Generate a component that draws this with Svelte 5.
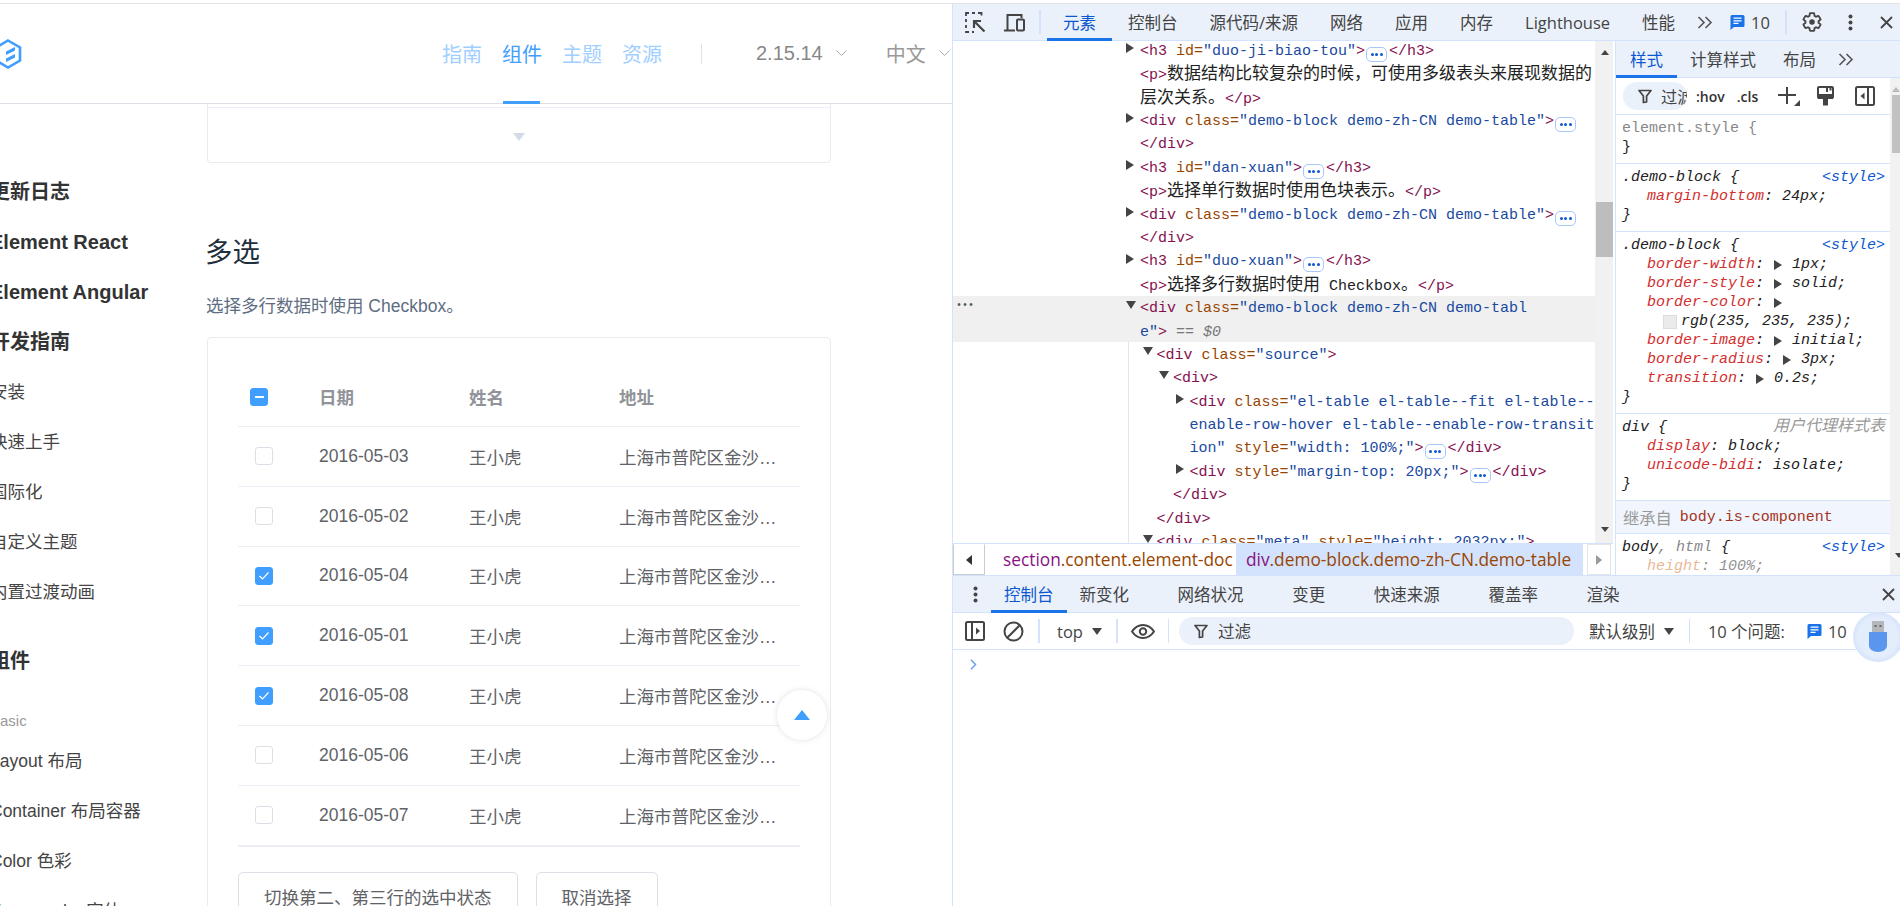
<script>
	const side = [
		{ t: '更新日志', k: 'b first' },
		{ t: 'Element React', k: 'b' },
		{ t: 'Element Angular', k: 'b' },
		{ t: '开发指南', k: 'b' },
		{ t: '安装', k: '' },
		{ t: '快速上手', k: '' },
		{ t: '国际化', k: '' },
		{ t: '自定义主题', k: '' },
		{ t: '内置过渡动画', k: '' },
		{ t: '组件', k: 'b group' },
		{ t: 'Basic', k: 'cap' },
		{ t: 'Layout 布局', k: '' },
		{ t: 'Container 布局容器', k: '' },
		{ t: 'Color 色彩', k: '' },
		{ t: 'Typography 字体', k: '' }
	];

	const rows = [
		{ date: '2016-05-03', on: false },
		{ date: '2016-05-02', on: false },
		{ date: '2016-05-04', on: true },
		{ date: '2016-05-01', on: true },
		{ date: '2016-05-08', on: true },
		{ date: '2016-05-06', on: false },
		{ date: '2016-05-07', on: false }
	];

	const blockCls = 'demo-block demo-zh-CN demo-table';

	// segments: [kind, text]; kind "more" is the collapsed-children pill
	const tree = [
		{ arrow: 'r', s: [['t', '<h3 '], ['a', 'id='], ['v', '"duo-ji-biao-tou"'], ['t', '>'], ['more'], ['t', '</h3>']] },
		{ s: [['t', '<p>'], ['z', '数据结构比较复杂的时候，可使用多级表头来展现数据的']] },
		{ s: [['z', '层次关系。'], ['t', '</p>']] },
		{ arrow: 'r', s: [['t', '<div '], ['a', 'class='], ['v', `"${blockCls}"`], ['t', '>'], ['more']] },
		{ s: [['t', '</div>']] },
		{ arrow: 'r', s: [['t', '<h3 '], ['a', 'id='], ['v', '"dan-xuan"'], ['t', '>'], ['more'], ['t', '</h3>']] },
		{ s: [['t', '<p>'], ['z', '选择单行数据时使用色块表示。'], ['t', '</p>']] },
		{ arrow: 'r', s: [['t', '<div '], ['a', 'class='], ['v', `"${blockCls}"`], ['t', '>'], ['more']] },
		{ s: [['t', '</div>']] },
		{ arrow: 'r', s: [['t', '<h3 '], ['a', 'id='], ['v', '"duo-xuan"'], ['t', '>'], ['more'], ['t', '</h3>']] },
		{ s: [['t', '<p>'], ['z', '选择多行数据时使用'], ['x', ' Checkbox'], ['z', '。'], ['t', '</p>']] },
		{ arrow: 'd', sel: true, dots: true, s: [['t', '<div '], ['a', 'class='], ['v', '"demo-block demo-zh-CN demo-tabl']] },
		{ sel: true, s: [['v', 'e"'], ['t', '>'], ['g', ' == $0']] },
		{ arrow: 'd', lv: 1, s: [['t', '<div '], ['a', 'class='], ['v', '"source"'], ['t', '>']] },
		{ arrow: 'd', lv: 2, s: [['t', '<div>']] },
		{ arrow: 'r', lv: 3, s: [['t', '<div '], ['a', 'class='], ['v', '"el-table el-table--fit el-table--']] },
		{ lv: 3, s: [['v', 'enable-row-hover el-table--enable-row-transit']] },
		{ lv: 3, s: [['v', 'ion"'], ['a', ' style='], ['v', '"width: 100%;"'], ['t', '>'], ['more'], ['t', '</div>']] },
		{ arrow: 'r', lv: 3, s: [['t', '<div '], ['a', 'style='], ['v', '"margin-top: 20px;"'], ['t', '>'], ['more'], ['t', '</div>']] },
		{ lv: 2, s: [['t', '</div>']] },
		{ lv: 1, s: [['t', '</div>']] },
		{ arrow: 'd', lv: 1, s: [['t', '<div '], ['a', 'class='], ['v', '"meta"'], ['a', ' style='], ['v', '"height: 2032px;"'], ['t', '>']] }
	];
</script>

{#snippet msgIcon()}
	<svg class="msg" width="15" height="16" viewBox="0 0 15 16">
		<path d="M2 1h11a1.5 1.5 0 0 1 1.5 1.5v9a1.5 1.5 0 0 1-1.5 1.5H4l-3.5 3V2.5A1.5 1.5 0 0 1 2 1z" fill="#1a73e8" />
		<path d="M3.5 4.2h8M3.5 6.8h8M3.5 9.4h5" stroke="#fff" stroke-width="1.3" />
	</svg>
{/snippet}

{#snippet funnel()}
	<svg width="14" height="15" viewBox="0 0 14 15" fill="none" stroke="#444" stroke-width="1.7">
		<path d="M1 1.5h12L8.6 7v6L5.4 13.5V7z" stroke-linejoin="round" />
	</svg>
{/snippet}

{#snippet chevrons()}
	<svg width="16" height="13" viewBox="0 0 16 13" fill="none" stroke="#555" stroke-width="1.6">
		<path d="M1.5 1l5.5 5.5-5.5 5.5M8.5 1l5.500 5.500-5.500 5.500" />
	</svg>
{/snippet}

{#snippet closeX()}
	<svg width="13" height="13" viewBox="0 0 13 13" stroke="#444" stroke-width="1.8"><path d="M1 1l11 11M12 1L1 12" /></svg>
{/snippet}

{#snippet vdots()}
	<svg width="5" height="17" viewBox="0 0 5 17" fill="#444"><circle cx="2.5" cy="2.5" r="2" /><circle cx="2.5" cy="8.5" r="2" /><circle cx="2.5" cy="14.5" r="2" /></svg>
{/snippet}

<div class="app">
	<div class="main">
		<div class="page">
			<header class="head">
				<svg class="logo" width="28" height="30" viewBox="0 0 28 30" fill="none">
					<path d="M14 1.5l12 7v13l-12 7-12-7v-13z" stroke="#409eff" stroke-width="2.6" />
					<path d="M12 12.5l9-4.5v3.500l-9 4.500zM12 19.500l9-4.500v3.500l-9 4.500z" fill="#409eff" />
				</svg>
				<nav class="nav">
					<span>指南</span>
					<span class="on">组件</span>
					<span>主题</span>
					<span>资源</span>
				</nav>
				<i class="nav-sep"></i>
				<span class="ver">2.15.14</span>
				<svg class="chev" width="11" height="7" viewBox="0 0 11 7" fill="none" stroke="#aaa"><path d="M.5.5l5 5 5-5" /></svg>
				<span class="lang">中文</span>
				<svg class="chev" width="11" height="7" viewBox="0 0 11 7" fill="none" stroke="#aaa"><path d="M.5.5l5 5 5-5" /></svg>
			</header>

			<div class="body">
				<aside class="side">
					{#each side as it}
						<div class="item {it.k}">{it.t}</div>
					{/each}
				</aside>

				<section class="doc">
					<div class="tail">
						<div class="control"><i class="down"></i></div>
					</div>
					<h3>多选</h3>
					<p>选择多行数据时使用 Checkbox。</p>
					<div class="block">
						<div class="table">
							<div class="row hd">
								<span class="cb on first"><i class="minus"></i></span>
								<span>日期</span>
								<span>姓名</span>
								<span>地址</span>
							</div>
							{#each rows as r}
								<div class="row">
									<span class="cb" class:on={r.on}>
										{#if r.on}
											<svg width="12" height="10" viewBox="0 0 12 10" fill="none" stroke="#fff" stroke-width="1.2"><path d="M1.5 5l3 3 6-6.5" /></svg>
										{/if}
									</span>
									<span>{r.date}</span>
									<span>王小虎</span>
									<span class="addr">上海市普陀区金沙江路 1518 弄</span>
								</div>
							{/each}
						</div>
						<div class="btns">
							<button type="button">切换第二、第三行的选中状态</button>
							<button type="button">取消选择</button>
						</div>
					</div>
				</section>
			</div>

			<div class="backtop"><i></i></div>
		</div>

		<div class="devtools">
			<div class="bar top">
				<svg class="ic-inspect" width="21" height="21" viewBox="0 0 21 21" fill="none" stroke="#444">
					<path d="M1 4V1h3M7 1h3M13 1h3.500v2.500M1 7v3M1 13v3M1 19v1h3M7 20h2" stroke-width="1.8" />
					<path d="M19.500 19.500L10 10M9 16V9h7" stroke-width="2.2" />
				</svg>
				<svg class="ic-device" width="22" height="19" viewBox="0 0 22 19" fill="none" stroke="#444" stroke-width="2">
					<path d="M1 17.500h11M4.500 17V2h14v3" />
					<rect x="14" y="6.500" width="7" height="11" rx="1" />
				</svg>
				<i class="sep s1"></i>
				<span class="tab active">元素</span>
				<span class="tab">控制台</span>
				<span class="tab">源代码/来源</span>
				<span class="tab">网络</span>
				<span class="tab">应用</span>
				<span class="tab">内存</span>
				<span class="tab">Lighthouse</span>
				<span class="tab">性能</span>
				<span class="more-tabs">{@render chevrons()}</span>
				<span class="count">{@render msgIcon()}10</span>
				<i class="sep s2"></i>
				<svg class="gear" width="22" height="22" viewBox="0 0 24 24" fill="none" stroke="#444" stroke-width="2">
					<path d="M19.14 12.94c.04-.3.06-.61.06-.94 0-.32-.02-.64-.07-.94l2.03-1.58c.18-.14.23-.41.12-.61l-1.92-3.32c-.12-.22-.37-.29-.59-.22l-2.39.96c-.5-.38-1.03-.7-1.62-.94l-.36-2.54c-.04-.24-.24-.41-.48-.41h-3.84c-.24 0-.43.17-.47.41l-.36 2.54c-.59.24-1.13.57-1.62.94l-2.39-.96c-.22-.08-.47 0-.59.22L2.74 8.87c-.12.21-.08.47.12.61l2.03 1.58c-.05.3-.09.63-.09.94s.02.64.07.94l-2.03 1.58c-.18.14-.23.41-.12.61l1.92 3.32c.12.22.37.29.59.22l2.39-.96c.5.38 1.03.7 1.62.94l.36 2.54c.05.24.24.41.48.41h3.84c.24 0 .44-.17.47-.41l.36-2.54c.59-.24 1.13-.56 1.62-.94l2.39.96c.22.08.47 0 .59-.22l1.92-3.32c.12-.22.07-.47-.12-.61l-2.01-1.58z" />
					<circle cx="12" cy="12" r="3" fill="#444" stroke="none" />
				</svg>
				<span class="dots">{@render vdots()}</span>
				<span class="x">{@render closeX()}</span>
			</div>

			<div class="split">
				<div class="elements">
					<div class="tree-wrap">
						<div class="tree">
							<i class="guide"></i>
							{#each tree as ln}
								<div class="ln" class:sel={ln.sel} style="padding-left: {(ln.lv || 0) * 16.5 + 187}px">{#if ln.dots}<span class="ln-dots">•••</span>{/if}{#if ln.arrow}<i class="arrow {ln.arrow}"></i>{/if}{#each ln.s as [k, txt]}{#if k === 'more'}<span class="pill"><b></b><b></b><b></b></span>{:else}<span class={k}>{txt}</span>{/if}{/each}</div>
							{/each}
						</div>
						<div class="sbar wide">
							<i class="tri up"></i>
							<i class="thumb"></i>
							<i class="tri dn"></i>
						</div>
					</div>
					<div class="crumbs">
						<span class="crumb-btn"><i class="tri-l"></i></span>
						<span class="crumb"><span class="tagn">section</span><span class="cls">.content.element-doc</span></span>
						<span class="crumb cur"><span class="tagn">div</span><span class="cls">.demo-block.demo-zh-CN.demo-table</span></span>
						<span class="crumb-btn end"><i class="tri-r"></i></span>
					</div>
				</div>

				<div class="styles">
					<div class="bar sub">
						<span class="tab active">样式</span>
						<span class="tab">计算样式</span>
						<span class="tab">布局</span>
						<span class="more-tabs">{@render chevrons()}</span>
					</div>
					<div class="styles-in">
						<div class="styles-col">
							<div class="filter-row">
								<span class="pill-filter">{@render funnel()}<span>过滤</span></span>
								<span class="hov">:hov</span>
								<span class="hov cl">.cls</span>
								<svg class="plus" width="24" height="22" viewBox="0 0 24 22" fill="#444">
									<path d="M9 2h2v7h8v2h-8v8H9v-8H1V9h8z" />
									<path d="M23 15v6h-6z" />
								</svg>
								<svg class="brush" width="17" height="20" viewBox="0 0 17 20">
									<rect x="1" y="1" width="15" height="11" rx="1" fill="none" stroke="#444" stroke-width="2" />
									<path d="M1 8h15v5H1zM9 1h2v5H9zM12.500 1h2v3.500h-2zM6 13h5v6.500H6z" fill="#444" />
								</svg>
								<svg class="toggle" width="20" height="20" viewBox="0 0 20 20" fill="none" stroke="#444" stroke-width="2">
									<rect x="1" y="1" width="18" height="18" rx="1.500" />
									<path d="M13 1v18" />
									<path d="M9.500 6.500v7L5.500 10z" fill="#444" stroke="none" />
								</svg>
							</div>
							<div class="rule">
								<div class="rl gr up">element.style {'{'}</div>
								<div class="rl up">{'}'}</div>
							</div>
							<div class="rule">
								<div class="rl"><span>.demo-block {'{'}</span><span class="src">&lt;style&gt;</span></div>
								<div class="rl in"><span class="pr">margin-bottom</span>: 24px;</div>
								<div class="rl">{'}'}</div>
							</div>
							<div class="rule">
								<div class="rl"><span>.demo-block {'{'}</span><span class="src">&lt;style&gt;</span></div>
								<div class="rl in"><span class="pr">border-width</span>: <i class="arrow r inl"></i> 1px;</div>
								<div class="rl in"><span class="pr">border-style</span>: <i class="arrow r inl"></i> solid;</div>
								<div class="rl in"><span class="pr">border-color</span>: <i class="arrow r inl"></i></div>
								<div class="rl in2"><i class="swatch"></i>rgb(235, 235, 235);</div>
								<div class="rl in"><span class="pr">border-image</span>: <i class="arrow r inl"></i> initial;</div>
								<div class="rl in"><span class="pr">border-radius</span>: <i class="arrow r inl"></i> 3px;</div>
								<div class="rl in"><span class="pr">transition</span>: <i class="arrow r inl"></i> 0.2s;</div>
								<div class="rl">{'}'}</div>
							</div>
							<div class="rule">
								<div class="rl"><span>div {'{'}</span><span class="ua">用户代理样式表</span></div>
								<div class="rl in"><span class="pr">display</span>: block;</div>
								<div class="rl in"><span class="pr">unicode-bidi</span>: isolate;</div>
								<div class="rl">{'}'}</div>
							</div>
							<div class="inherit"><span class="from">继承自</span><span class="cname">body.is-component</span></div>
							<div class="rule last">
								<div class="rl"><span>body<span class="gr">, html</span> {'{'}</span><span class="src">&lt;style&gt;</span></div>
								<div class="rl in faded"><span class="pr">height</span>: 100%;</div>
							</div>
						</div>
						<div class="sbar thin">
							<i class="tri up soft"></i>
							<i class="thumb"></i>
							<i class="tri dn"></i>
						</div>
					</div>
				</div>
			</div>

			<div class="drawer">
				<div class="bar dtabs">
					<span class="dots">{@render vdots()}</span>
					<span class="tab active">控制台</span>
					<span class="tab">新变化</span>
					<span class="tab">网络状况</span>
					<span class="tab">变更</span>
					<span class="tab">快速来源</span>
					<span class="tab">覆盖率</span>
					<span class="tab">渲染</span>
					<span class="x">{@render closeX()}</span>
				</div>
				<div class="ctool">
					<svg class="c-side" width="20" height="20" viewBox="0 0 20 20" fill="none" stroke="#444" stroke-width="2">
						<rect x="1" y="1" width="18" height="18" rx="1.500" />
						<path d="M7 1v18" />
						<path d="M11 6.500v7l4-3.500z" fill="#444" stroke="none" />
					</svg>
					<svg class="c-block" width="21" height="21" viewBox="0 0 21 21" fill="none" stroke="#444" stroke-width="2">
						<circle cx="10.500" cy="10.500" r="9" /><path d="M4 17L17 4" />
					</svg>
					<i class="sep c1"></i>
					<span class="ctx">top</span>
					<i class="caret"></i>
					<i class="sep c2"></i>
					<svg class="eye" width="24" height="15" viewBox="0 0 24 15" fill="none" stroke="#444" stroke-width="2">
						<path d="M1 7.500C4 3 8 1 12 1s8 2 11 6.500C20 12 16 14 12 14S4 12 1 7.500z" />
						<circle cx="12" cy="7.500" r="3.200" />
					</svg>
					<i class="sep c3"></i>
					<span class="cfilter">{@render funnel()}<span>过滤</span></span>
					<span class="lvl">默认级别</span>
					<i class="caret"></i>
					<i class="sep c4"></i>
					<span class="issues">10 个问题:</span>
					<span class="count c">{@render msgIcon()}10</span>
				</div>
				<div class="prompt">
					<svg width="7" height="11" viewBox="0 0 7 11" fill="none" stroke="#6aa2f0" stroke-width="1.500"><path d="M1 .8l4.500 4.700L1 10.200" /></svg>
				</div>
				<div class="usb">
					<svg width="24" height="32" viewBox="0 0 24 32">
						<rect x="6" y="0" width="12" height="12" rx="1" fill="#b4b6ba" />
						<rect x="8.500" y="4" width="2" height="2" fill="#666" />
						<rect x="13.500" y="4" width="2" height="2" fill="#666" />
						<path d="M3 11h18v14a9 6 0 0 1-18 0z" fill="#5a95ee" />
					</svg>
				</div>
			</div>
		</div>
	</div>
</div>

<style>
	:global(body) {
		margin: 0;
		background: #fff;
	}

	i {
		font-style: normal;
	}

	.app {
		width: 1900px;
		height: 906px;
		padding-top: 3px;
		box-sizing: border-box;
		overflow: hidden;
	}

	.main {
		display: flex;
		height: 903px;
		border-top: 1px solid #e3e3e3;
	}

	/* left: docs page */
	.page {
		position: relative;
		width: 952px;
		flex: none;
		overflow: hidden;
		font-family: 'Liberation Sans', 'Noto Sans CJK SC', sans-serif;
	}

	.head {
		display: flex;
		align-items: center;
		height: 99px;
		border-bottom: 1px solid #dcdfe6;
		font-size: 20px;
		box-sizing: content-box;
	}

	.logo {
		margin-left: -6px;
		flex: none;
	}

	.nav {
		display: flex;
		align-self: stretch;
		gap: 20px;
		margin-left: 420px;
		color: #a0cfff;
	}

	.nav span {
		position: relative;
		display: flex;
		align-items: center;
		width: 40px;
	}

	.nav .on {
		color: #409eff;
	}

	.nav .on::after {
		content: '';
		position: absolute;
		left: 1px;
		bottom: -1px;
		width: 37px;
		height: 3px;
		background: #409eff;
	}

	.nav-sep {
		width: 1px;
		height: 20px;
		margin-left: 39px;
		background: #e2e2e2;
	}

	.ver {
		margin-left: 54px;
		color: #888;
	}

	.chev {
		margin-left: 13px;
		flex: none;
	}

	.lang {
		margin-left: 39px;
		color: #999;
	}

	.body {
		display: flex;
	}

	.side {
		flex: none;
		width: 217px;
		margin-left: -10px;
		color: #444;
	}

	.item {
		height: 50px;
		line-height: 50px;
		font-size: 17.5px;
		white-space: nowrap;
	}

	.item.b {
		font-size: 20px;
		font-weight: bold;
		color: #333;
	}

	.item.first {
		margin-top: 63px;
	}

	.item.group {
		margin-top: 19px;
	}

	.item.cap {
		height: 30px;
		line-height: 30px;
		margin-top: 20px;
		font-size: 15px;
		color: #999;
	}

	.doc {
		width: 624px;
		flex: none;
	}

	.tail {
		height: 59px;
		padding-top: 3px;
		box-sizing: border-box;
		border: 1px solid #ebebeb;
		border-top: none;
		border-radius: 0 0 4px 4px;
	}

	.control {
		display: flex;
		justify-content: center;
		height: 100%;
		border-top: 1px solid #eaeefb;
		padding-top: 25px;
		box-sizing: border-box;
	}

	.down {
		width: 0;
		height: 0;
		border: 6px solid transparent;
		border-top: 8px solid #d3dce6;
		border-bottom: none;
	}

	h3 {
		margin: 70px 0 0 -2px;
		font-size: 27.5px;
		line-height: 40px;
		font-weight: 400;
		color: #1f2f3d;
	}

	.doc p {
		margin: 19px 0 0 -1px;
		font-size: 17.5px;
		line-height: 28px;
		color: #5e6d82;
	}

	.block {
		margin-top: 17px;
		padding: 29px 30px 0 30px;
		border: 1px solid #ebebeb;
		border-radius: 4px;
		height: 600px;
	}

	.table {
		border-bottom: 1px solid #ebeef5;
	}

	.row {
		display: grid;
		grid-template-columns: 81px 150px 150px 181px;
		align-items: center;
		height: 59.8px;
		box-sizing: border-box;
		border-bottom: 1px solid #ebeef5;
		font-size: 17.5px;
		color: #606266;
	}

	.row.hd {
		height: 60px;
		font-weight: bold;
		color: #909399;
	}

	.cb {
		display: flex;
		align-items: center;
		justify-content: center;
		width: 18px;
		height: 18px;
		margin-left: 17px;
		box-sizing: border-box;
		border: 1px solid #dcdfe6;
		border-radius: 3px;
		background: #fff;
	}

	.cb.on {
		border-color: #409eff;
		background: #409eff;
	}

	.cb.first {
		margin-left: 12px;
	}

	.minus {
		width: 9px;
		height: 2px;
		background: #fff;
	}

	.addr {
		width: 160px;
		overflow: hidden;
		white-space: nowrap;
		text-overflow: ellipsis;
	}

	.btns {
		display: flex;
		gap: 18px;
		margin-top: 25px;
	}

	.btns button {
		height: 50px;
		padding: 0 25px;
		border: 1px solid #dcdfe6;
		border-radius: 5px;
		background: #fff;
		font: inherit;
		font-size: 17.5px;
		color: #606266;
	}

	.backtop {
		position: absolute;
		left: 777px;
		top: 686px;
		display: flex;
		align-items: center;
		justify-content: center;
		width: 50px;
		height: 50px;
		border-radius: 50%;
		background: #fff;
		box-shadow: 0 0 6px rgba(0, 0, 0, 0.12);
	}

	.backtop i {
		width: 0;
		height: 0;
		border: 8px solid transparent;
		border-bottom: 10px solid #409eff;
		border-top: none;
	}

	/* right: devtools */
	.devtools {
		display: flex;
		flex-direction: column;
		flex: 1;
		min-width: 0;
		border-left: 1px solid #d3e3fd;
		font-family: 'Open Sans', 'Noto Sans CJK SC', sans-serif;
		font-size: 16.5px;
		color: #444;
	}

	.bar {
		display: flex;
		align-items: center;
		flex: none;
		background: #ebf1fb;
		border-bottom: 1px solid #d3e3fd;
		box-sizing: content-box;
	}

	.top {
		height: 36px;
	}

	.tab {
		display: flex;
		align-items: center;
		align-self: stretch;
		padding: 0 16px;
		white-space: nowrap;
		position: relative;
	}

	.tab.active {
		color: #0b57d0;
	}

	.tab.active::after {
		content: '';
		position: absolute;
		left: 0;
		right: 0;
		bottom: -1px;
		height: 3px;
		background: #1a73e8;
	}

	.ic-inspect {
		margin-left: 12px;
	}

	.ic-device {
		margin-left: 17px;
	}

	.sep {
		display: block;
		flex: none;
		width: 2px;
		height: 24px;
		background: #d3e3fd;
	}

	.s1 {
		margin: 0 6px 0 14px;
	}

	.more-tabs {
		display: flex;
		margin-left: 6px;
	}

	.count {
		display: flex;
		align-items: center;
		gap: 6px;
		margin-left: 17px;
	}

	.s2 {
		margin-left: 15px;
	}

	.gear {
		margin-left: 14px;
	}

	.top .dots {
		display: flex;
		margin-left: 25px;
	}

	.top .x {
		display: flex;
		margin-left: 27px;
	}

	.split {
		display: flex;
		height: 534px;
		flex: none;
	}

	.elements {
		display: flex;
		flex-direction: column;
		width: 660px;
		flex: none;
	}

	.tree-wrap {
		display: flex;
		height: 502px;
		flex: none;
		overflow: hidden;
	}

	.tree {
		position: relative;
		width: 642px;
		flex: none;
		overflow: hidden;
		font-family: 'Liberation Mono', 'Noto Sans CJK SC', monospace;
		font-size: 15px;
		color: #222;
	}

	.guide {
		position: absolute;
		left: 175px;
		top: 301px;
		bottom: 0;
		width: 1px;
		background: #dfe7f5;
	}

	.ln {
		position: relative;
		height: 23.4px;
		line-height: 23.4px;
		white-space: pre;
		top: -2.7px;
	}

	.ln > span {
		position: relative;
		top: 1.5px;
	}

	.ln.sel {
		background: #f0f0f0;
	}

	.ln > .ln-dots {
		position: absolute;
		left: 3px;
		top: -2px;
		font-size: 10px;
		color: #555;
	}

	.ln .t {
		color: #85104f;
	}

	.ln .a {
		color: #994500;
	}

	.ln .v {
		color: #1a4a9f;
	}

	.ln .z {
		font-size: 17px;
		color: #222;
	}

	.ln .g {
		font-style: italic;
		color: #777;
	}

	.arrow {
		display: inline-block;
		width: 0;
		height: 0;
		border: 5px solid transparent;
	}

	.ln .arrow {
		position: absolute;
		margin-left: -14px;
		top: 5px;
	}

	.arrow.r {
		border-left: 8px solid #444;
		border-right: none;
	}

	.arrow.d {
		border-top: 8px solid #444;
		border-bottom: none;
	}

	.arrow.inl {
		margin: 0 1px;
		vertical-align: -1px;
	}

	.ln > .pill {
		display: inline-flex;
		align-items: center;
		justify-content: center;
		gap: 1.5px;
		width: 19px;
		height: 13px;
		margin: 0 2px 0 1px;
		vertical-align: -1px;
		border: 1px solid #a8c7fa;
		border-radius: 5px;
	}

	.pill b {
		width: 3px;
		height: 3px;
		border-radius: 50%;
		background: #0b57d0;
	}

	.sbar {
		display: flex;
		flex-direction: column;
		align-items: flex-end;
		background: #f1f1f1;
	}

	.sbar.wide {
		width: 18px;
		height: 502px;
		flex: none;
	}

	.sbar.wide .thumb {
		width: 17px;
		height: 55px;
		margin-top: 147px;
		background: #bdbdbd;
	}

	.tri {
		width: 0;
		height: 0;
		border: 4.5px solid transparent;
	}

	.tri.up {
		border-bottom: 5px solid #444;
		border-top: none;
		margin: 9px 4px 0 0;
	}

	.tri.dn {
		border-top: 5px solid #444;
		border-bottom: none;
	}

	.sbar.wide .tri.dn {
		margin: 270px 4px 0 0;
	}

	.crumbs {
		display: flex;
		height: 32px;
		flex: none;
		border-top: 1px solid #d3e3fd;
		box-sizing: border-box;
		background: #fff;
		white-space: nowrap;
		font-size: 17.3px;
	}

	.crumb-btn {
		display: flex;
		align-items: center;
		justify-content: center;
		width: 32px;
		flex: none;
		box-sizing: border-box;
		border: 1px solid #ccc;
		border-top-color: #fff;
	}

	.crumb-btn.end {
		width: 24px;
		margin-left: 4px;
		border-color: #e5e5e5;
	}

	.tri-l {
		border: 5px solid transparent;
		border-right: 6px solid #333;
		border-left: none;
	}

	.tri-r {
		border: 5px solid transparent;
		border-left: 6px solid #999;
		border-right: none;
	}

	.crumb {
		display: flex;
		align-items: center;
		padding: 0 10px 0 18px;
		width: 251px;
		box-sizing: border-box;
	}

	.crumb.cur {
		width: 347px;
		padding: 0 0 0 10px;
		background: #d3e3fd;
	}

	.tagn {
		color: #881280;
	}

	.cls {
		color: #994500;
	}

	.styles {
		display: flex;
		flex-direction: column;
		width: 285px;
		margin-left: 2px;
		flex: none;
		border-left: 1px solid #d3e3fd;
		box-sizing: border-box;
	}

	.sub {
		height: 36px;
	}

	.sub .tab {
		padding: 0 14px;
	}

	.sub .tab:nth-child(2) {
		padding-left: 13px;
		padding-right: 13px;
	}

	.sub .more-tabs {
		margin-left: 8px;
	}

	.styles-in {
		display: flex;
		flex: 1;
		min-height: 0;
	}

	.styles-col {
		width: 274px;
		flex: none;
		overflow: hidden;
		font-family: 'Liberation Mono', 'Noto Sans CJK SC', monospace;
		font-size: 15px;
		color: #222;
	}

	.sbar.thin {
		width: 10px;
		flex: none;
	}

	.sbar.thin .tri.up {
		margin: 9px 0 0 0;
		border-bottom-color: #bbb;
	}

	.sbar.thin .thumb {
		width: 8px;
		height: 58px;
		margin-top: 3px;
		background: #c1c1c1;
	}

	.sbar.thin .tri.dn {
		margin-top: 400px;
		margin-right: -3px;
	}

	.filter-row {
		display: flex;
		align-items: center;
		height: 36px;
		font-family: 'Open Sans', 'Noto Sans CJK SC', sans-serif;
	}

	.pill-filter {
		display: flex;
		align-items: center;
		gap: 9px;
		width: 64px;
		height: 28px;
		margin-left: 7px;
		padding-left: 15px;
		box-sizing: border-box;
		overflow: hidden;
		border-radius: 14px;
		background: #ebf1fb;
		color: #444;
		white-space: nowrap;
		font-size: 16.25px;
	}

	.pill-filter svg,
	.cfilter svg {
		flex: none;
	}

	.hov {
		margin-left: 9px;
		font-size: 14px;
		font-weight: 600;
		color: #333;
	}

	.hov.cl {
		margin-left: 12px;
	}

	.plus {
		margin-left: 19px;
		flex: none;
	}

	.brush {
		margin-left: 16px;
		flex: none;
	}

	.toggle {
		margin-left: 21px;
		flex: none;
	}

	.rule {
		padding: 4px 0 6px;
		border-top: 1px solid #d3e3fd;
	}

	.rule.last {
		padding-bottom: 0;
	}

	.rl {
		display: flex;
		justify-content: space-between;
		height: 19px;
		line-height: 19px;
		padding-left: 6px;
		white-space: pre;
		font-style: italic;
	}

	.rl.up {
		font-style: normal;
	}

	.rl.in,
	.rl.in2 {
		justify-content: flex-start;
		align-items: center;
		padding-left: 31px;
	}

	.rl.in2 {
		padding-left: 47px;
	}

	.gr {
		color: #888;
	}

	.pr {
		color: #d32f2f;
	}

	.src {
		padding-right: 5px;
		color: #0b57d0;
	}

	.ua {
		padding-right: 5px;
		font-size: 16px;
		color: #999;
	}

	.swatch {
		display: inline-block;
		width: 12px;
		height: 12px;
		margin-right: 4px;
		border: 1px solid #ddd;
		background: #ebebeb;
	}

	.faded {
		opacity: 0.5;
	}

	.faded .pr {
		color: #d9742f;
	}

	.inherit {
		display: flex;
		align-items: center;
		gap: 8px;
		height: 32px;
		padding-left: 7px;
		border-top: 1px solid #d3e3fd;
		background: #f1f5fd;
	}

	.from {
		font-family: 'Open Sans', 'Noto Sans CJK SC', sans-serif;
		font-size: 16.25px;
		color: #999;
	}

	.cname {
		color: #a5331f;
	}

	.drawer {
		position: relative;
		flex: 1;
		min-height: 0;
		border-top: 1px solid #d3e3fd;
	}

	.dtabs {
		height: 36px;
	}

	.dtabs .dots {
		display: flex;
		margin: 0 13px 0 20px;
	}

	.dtabs .tab {
		padding: 0 24.3px;
	}

	.dtabs .tab:nth-child(2) {
		padding: 0 13px;
	}

	.dtabs .tab:nth-child(3) {
		padding-left: 13px;
	}

	.dtabs .x {
		display: flex;
		margin-left: auto;
		margin-right: 5px;
	}

	.ctool {
		display: flex;
		align-items: center;
		height: 36px;
		border-bottom: 1px solid #d3e3fd;
		box-sizing: content-box;
	}

	.c-side {
		margin-left: 12px;
		flex: none;
	}

	.c-block {
		margin-left: 18px;
		flex: none;
	}

	.c1 {
		margin-left: 14px;
	}

	.ctx {
		margin-left: 17px;
	}

	.caret {
		flex: none;
		margin-left: 9px;
		border: 5.5px solid transparent;
		border-top: 7px solid #444;
		border-bottom: none;
	}

	.c2 {
		margin-left: 14px;
	}

	.eye {
		margin-left: 13px;
		flex: none;
	}

	.c3 {
		width: 1px;
		margin-left: 13px;
	}

	.cfilter {
		display: flex;
		align-items: center;
		gap: 10px;
		width: 395px;
		height: 28px;
		margin-left: 10px;
		padding-left: 15px;
		box-sizing: border-box;
		border-radius: 14px;
		background: #ebf1fb;
		flex: none;
	}

	.lvl {
		margin-left: 15px;
	}

	.c4 {
		width: 1px;
		margin-left: 15px;
	}

	.issues {
		margin-left: 18px;
		white-space: nowrap;
	}

	.count.c {
		margin-left: 22px;
	}

	.prompt {
		display: flex;
		padding: 9px 0 0 17px;
	}

	.usb {
		position: absolute;
		left: 900px;
		top: 36px;
		display: flex;
		align-items: flex-start;
		justify-content: center;
		width: 50px;
		height: 50px;
		padding-top: 9px;
		box-sizing: border-box;
		border-radius: 50%;
		background: radial-gradient(circle, #e4edfc 55%, #c9dbf8 85%, #dbe7fb 100%);
	}
</style>
